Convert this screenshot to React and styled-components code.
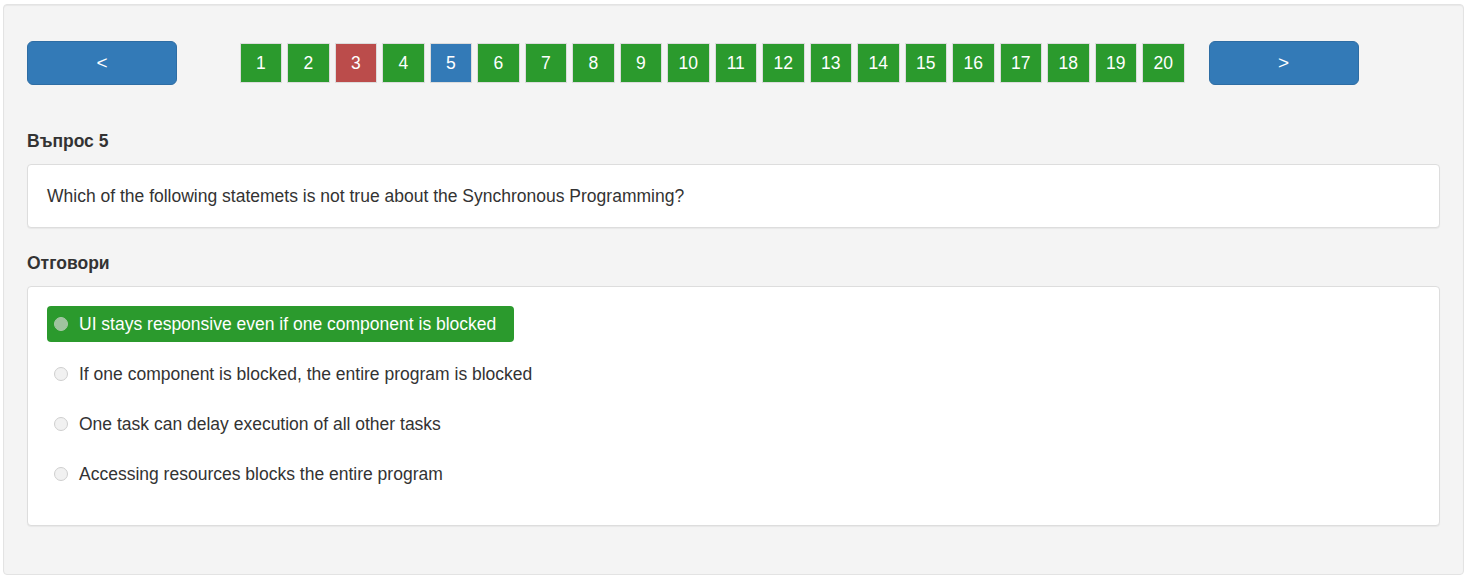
import styled, { createGlobalStyle } from "styled-components";

const PAGES = Array.from({ length: 20 }, (_, i) => i + 1);
const WRONG = [3];
const CURRENT = 5;

const ANSWERS = [
  "UI stays responsive even if one component is blocked",
  "If one component is blocked, the entire program is blocked",
  "One task can delay execution of all other tasks",
  "Accessing resources blocks the entire program",
];

export default function App() {
  return (
    <>
      <Global />
      <Well>
        <Pager>
          <NavButton>&lt;</NavButton>
          <Pages>
            {PAGES.map((n) => (
              <PageBtn
                key={n}
                $state={n === CURRENT ? "current" : WRONG.includes(n) ? "wrong" : "done"}
              >
                {n}
              </PageBtn>
            ))}
          </Pages>
          <NavButton>&gt;</NavButton>
        </Pager>

        <Label $top={44}>Въпрос 5</Label>
        <Panel>
          <Question>
            Which of the following statemets is not true about the Synchronous Programming?
          </Question>
        </Panel>

        <Label $top={23}>Отговори</Label>
        <Panel>
          <Answers>
            {ANSWERS.map((a, i) => (
              <Answer key={a} $selected={i === 0}>
                <Radio $selected={i === 0} />
                {a}
              </Answer>
            ))}
          </Answers>
        </Panel>
      </Well>
    </>
  );
}

/* ---------- styles ---------- */
const Global = createGlobalStyle`
  body {
    margin: 0;
    background: #fff;
    font-family: "Liberation Sans", Arial, sans-serif;
    color: #333;
  }
`;

const Well = styled.div`
  margin: 4px 5px 0 3px;
  height: 571px;
  box-sizing: border-box;
  padding: 36px 23px 0;
  background: #f4f4f4;
  border: 1px solid #e3e3e3;
  border-radius: 4px;
  box-shadow: inset 0 1px 1px rgba(0, 0, 0, 0.05);
`;

const Pager = styled.div`
  display: flex;
  align-items: center;
`;

const NavButton = styled.button`
  width: 150px;
  height: 44px;
  background: #337ab7;
  border: 1px solid #2e6da4;
  border-radius: 6px;
  color: #fff;
  font-family: inherit;
  font-size: 19px;
  padding: 0;
  cursor: pointer;
`;

const Pages = styled.div`
  display: flex;
  gap: 5px;
  margin: 0 24px 0 62.5px;
`;

const PAGE_BG = {
  done: "#2b9a2d",
  wrong: "#bb4c4b",
  current: "#337ab7",
};

const PageBtn = styled.button`
  width: 42.5px;
  height: 40px;
  box-sizing: border-box;
  padding: 0;
  border: 1px solid #dcdcdc;
  background: ${(p) => PAGE_BG[p.$state]};
  color: #fff;
  font-family: inherit;
  font-size: 17.5px;
  cursor: pointer;
`;

const Label = styled.div`
  font-size: 17.5px;
  font-weight: bold;
  color: #333;
  line-height: 24px;
  margin: ${(p) => p.$top}px 0 11px;
`;

const Panel = styled.div`
  background: #fff;
  border: 1px solid #ddd;
  border-radius: 4px;
  box-shadow: 0 1px 1px rgba(0, 0, 0, 0.05);
`;

const Question = styled.div`
  padding: 19px 19px;
  font-size: 17.5px;
  line-height: 24px;
`;

const Answers = styled.div`
  display: flex;
  flex-direction: column;
  align-items: flex-start;
  gap: 14px;
  padding: 19px 19px 33px;
`;

const Answer = styled.div`
  display: inline-flex;
  align-items: center;
  height: 36px;
  padding: 0 18px 0 6px;
  border-radius: 4px;
  font-size: 17.5px;
  background: ${(p) => (p.$selected ? "#2b9a2d" : "transparent")};
  color: ${(p) => (p.$selected ? "#fff" : "#333")};
`;

const Radio = styled.span`
  width: 14px;
  height: 14px;
  box-sizing: border-box;
  border-radius: 50%;
  margin: 0 11px 0 1px;
  border: 1px solid ${(p) => (p.$selected ? "#a6c9a6" : "#cfcfcf")};
  background: ${(p) => (p.$selected ? "#9fc39f" : "#f1f1f1")};
`;
